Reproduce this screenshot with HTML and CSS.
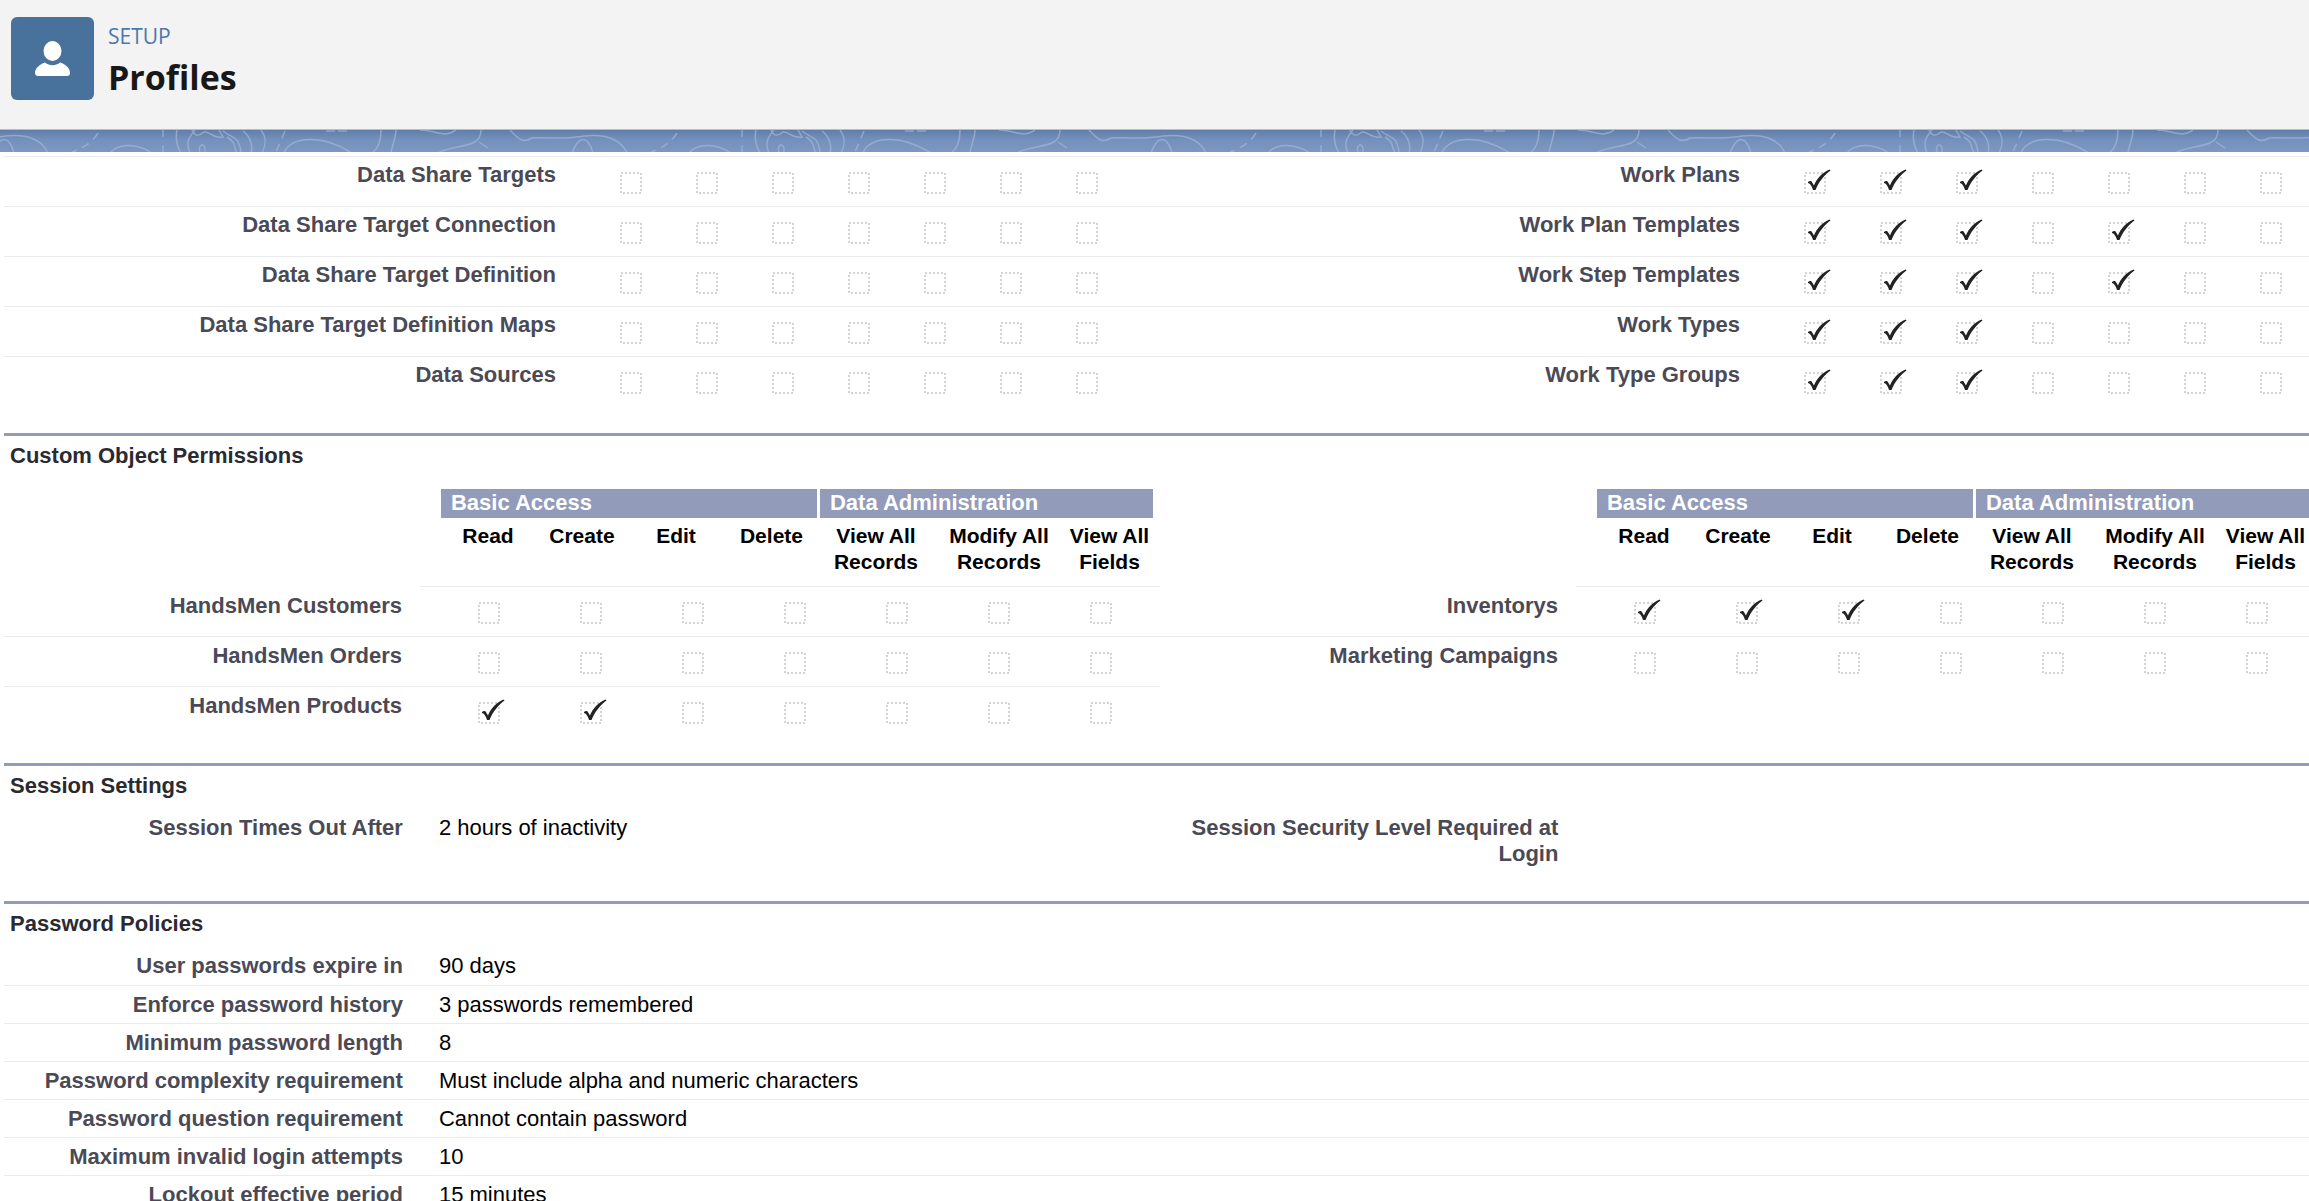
FILE: index.html
```html
<!DOCTYPE html>
<html lang="en">
<head>
<meta charset="utf-8">
<title>Profiles</title>
<link rel="stylesheet" href="styles.css">
</head>
<body>
<header class="page-header">
  <svg class="page-icon" viewBox="0 0 83 83" aria-hidden="true"><ellipse cx="41.500" cy="34" rx="9" ry="10"/><path d="M34 45.500C38.500 49 44.500 49 49 45.500C55 47.500 59 51 59 56Q59 59 56 59H27.500Q24 59 24 56C24 51 28.500 47.500 34 45.500Z"/></svg>
  <div class="page-title">
    <p class="eyebrow">SETUP</p>
    <h1>Profiles</h1>
  </div>
</header>
<svg class="band" aria-hidden="true">
  <defs>
    <linearGradient id="shade" x1="0" y1="0" x2="0" y2="1"><stop offset="0" stop-color="#607ea8"/><stop offset=".45" stop-color="#7491bd"/><stop offset="1" stop-color="#7b97c2"/></linearGradient>
    <pattern id="contours" width="579" height="23" patternUnits="userSpaceOnUse">
      <g fill="none" stroke="#a6b9d8" stroke-opacity=".65" stroke-width="1.500">
        <path d="M-69 0C-59 11-55 13-47 8C-30 7-15 10 5 6C25 4 41 8 48 23M510 0C520 11 524 13 532 8C549 7 564 10 584 6"/>
        <path d="M-7 23C0 5 9 5 14 23M572 23C579 5 588 5 593 23"/>
        <path d="M98 3Q90 16 72 22" stroke-dasharray="8 6"/>
        <path d="M163 0V23" stroke-dasharray="7 8"/>
        <path d="M110 23C118 13 137 13 152 23M177 0C175 10 178 18 181 23M190 23C185 12 190 6 195 0M192 0C195 7 199 6 204 2C209 1 214 9 223 7L219 0M223 1C233 9 239 5 241 23M200 23C198 15 203 12 205 18V23M227 7C237 13 233 17 237 23M243 1C251 7 253 17 251 23M261 0C267 8 266 15 262 23"/>
        <path d="M285 1L276 22" stroke-dasharray="8 6"/>
        <path d="M284 23C291 6 322 4 352 23M381 0C381 10 378 19 372 23M396 0C396 8 392 15 391 23M420 0C436 0 444 9 456 0M438 23C455 13 481 20 481 0M479 12L488 18"/>
        <path d="M326 1H350" stroke-dasharray="9 3"/>
      </g>
    </pattern>
  </defs>
  <rect width="100%" height="100%" fill="url(#shade)"/>
  <rect width="100%" height="100%" fill="url(#contours)"/>
</svg>
<main class="detail">
  <table class="matrix standard">
    <colgroup><col><col class="flag" span="7"><col class="gutter"><col><col class="flag" span="7"></colgroup>
    <tbody>
    <tr><th scope="row">Data Share Targets</th>
      <td><input type="checkbox" disabled aria-label="Read"></td><td><input type="checkbox" disabled aria-label="Create"></td><td><input type="checkbox" disabled aria-label="Edit"></td><td><input type="checkbox" disabled aria-label="Delete"></td><td><input type="checkbox" disabled aria-label="View All Records"></td><td><input type="checkbox" disabled aria-label="Modify All Records"></td><td><input type="checkbox" disabled aria-label="View All Fields"></td><td></td>
      <th scope="row">Work Plans</th>
      <td><input type="checkbox" disabled checked aria-label="Read"></td><td><input type="checkbox" disabled checked aria-label="Create"></td><td><input type="checkbox" disabled checked aria-label="Edit"></td><td><input type="checkbox" disabled aria-label="Delete"></td><td><input type="checkbox" disabled aria-label="View All Records"></td><td><input type="checkbox" disabled aria-label="Modify All Records"></td><td><input type="checkbox" disabled aria-label="View All Fields"></td></tr>
    <tr><th scope="row">Data Share Target Connection</th>
      <td><input type="checkbox" disabled aria-label="Read"></td><td><input type="checkbox" disabled aria-label="Create"></td><td><input type="checkbox" disabled aria-label="Edit"></td><td><input type="checkbox" disabled aria-label="Delete"></td><td><input type="checkbox" disabled aria-label="View All Records"></td><td><input type="checkbox" disabled aria-label="Modify All Records"></td><td><input type="checkbox" disabled aria-label="View All Fields"></td><td></td>
      <th scope="row">Work Plan Templates</th>
      <td><input type="checkbox" disabled checked aria-label="Read"></td><td><input type="checkbox" disabled checked aria-label="Create"></td><td><input type="checkbox" disabled checked aria-label="Edit"></td><td><input type="checkbox" disabled aria-label="Delete"></td><td><input type="checkbox" disabled checked aria-label="View All Records"></td><td><input type="checkbox" disabled aria-label="Modify All Records"></td><td><input type="checkbox" disabled aria-label="View All Fields"></td></tr>
    <tr><th scope="row">Data Share Target Definition</th>
      <td><input type="checkbox" disabled aria-label="Read"></td><td><input type="checkbox" disabled aria-label="Create"></td><td><input type="checkbox" disabled aria-label="Edit"></td><td><input type="checkbox" disabled aria-label="Delete"></td><td><input type="checkbox" disabled aria-label="View All Records"></td><td><input type="checkbox" disabled aria-label="Modify All Records"></td><td><input type="checkbox" disabled aria-label="View All Fields"></td><td></td>
      <th scope="row">Work Step Templates</th>
      <td><input type="checkbox" disabled checked aria-label="Read"></td><td><input type="checkbox" disabled checked aria-label="Create"></td><td><input type="checkbox" disabled checked aria-label="Edit"></td><td><input type="checkbox" disabled aria-label="Delete"></td><td><input type="checkbox" disabled checked aria-label="View All Records"></td><td><input type="checkbox" disabled aria-label="Modify All Records"></td><td><input type="checkbox" disabled aria-label="View All Fields"></td></tr>
    <tr><th scope="row">Data Share Target Definition Maps</th>
      <td><input type="checkbox" disabled aria-label="Read"></td><td><input type="checkbox" disabled aria-label="Create"></td><td><input type="checkbox" disabled aria-label="Edit"></td><td><input type="checkbox" disabled aria-label="Delete"></td><td><input type="checkbox" disabled aria-label="View All Records"></td><td><input type="checkbox" disabled aria-label="Modify All Records"></td><td><input type="checkbox" disabled aria-label="View All Fields"></td><td></td>
      <th scope="row">Work Types</th>
      <td><input type="checkbox" disabled checked aria-label="Read"></td><td><input type="checkbox" disabled checked aria-label="Create"></td><td><input type="checkbox" disabled checked aria-label="Edit"></td><td><input type="checkbox" disabled aria-label="Delete"></td><td><input type="checkbox" disabled aria-label="View All Records"></td><td><input type="checkbox" disabled aria-label="Modify All Records"></td><td><input type="checkbox" disabled aria-label="View All Fields"></td></tr>
    <tr><th scope="row">Data Sources</th>
      <td><input type="checkbox" disabled aria-label="Read"></td><td><input type="checkbox" disabled aria-label="Create"></td><td><input type="checkbox" disabled aria-label="Edit"></td><td><input type="checkbox" disabled aria-label="Delete"></td><td><input type="checkbox" disabled aria-label="View All Records"></td><td><input type="checkbox" disabled aria-label="Modify All Records"></td><td><input type="checkbox" disabled aria-label="View All Fields"></td><td></td>
      <th scope="row">Work Type Groups</th>
      <td><input type="checkbox" disabled checked aria-label="Read"></td><td><input type="checkbox" disabled checked aria-label="Create"></td><td><input type="checkbox" disabled checked aria-label="Edit"></td><td><input type="checkbox" disabled aria-label="Delete"></td><td><input type="checkbox" disabled aria-label="View All Records"></td><td><input type="checkbox" disabled aria-label="Modify All Records"></td><td><input type="checkbox" disabled aria-label="View All Fields"></td></tr>
    </tbody>
  </table>

  <section class="block">
    <h2>Custom Object Permissions</h2>
    <table class="matrix custom">
      <colgroup><col><col class="lead"><col class="flag" span="7"><col class="gutter"><col><col class="lead"><col class="flag" span="7"></colgroup>
      <thead>
      <tr><td></td><td class="lined"></td>
        <td class="lined" colspan="7"><div class="heads"><span class="group basic">Basic Access</span><span class="group admin">Data Administration</span><span>Read</span><span>Create</span><span>Edit</span><span>Delete</span><span>View All<br>Records</span><span>Modify All<br>Records</span><span>View All<br>Fields</span></div></td>
        <td class="lined"></td><td></td><td class="lined"></td>
        <td class="lined" colspan="7"><div class="heads"><span class="group basic">Basic Access</span><span class="group admin">Data Administration</span><span>Read</span><span>Create</span><span>Edit</span><span>Delete</span><span>View All<br>Records</span><span>Modify All<br>Records</span><span>View All<br>Fields</span></div></td></tr>
      </thead>
      <tbody>
      <tr><th scope="row">HandsMen Customers</th><td></td>
        <td><input type="checkbox" disabled aria-label="Read"></td><td><input type="checkbox" disabled aria-label="Create"></td><td><input type="checkbox" disabled aria-label="Edit"></td><td><input type="checkbox" disabled aria-label="Delete"></td><td><input type="checkbox" disabled aria-label="View All Records"></td><td><input type="checkbox" disabled aria-label="Modify All Records"></td><td><input type="checkbox" disabled aria-label="View All Fields"></td><td></td>
        <th scope="row">Inventorys</th><td></td>
        <td><input type="checkbox" disabled checked aria-label="Read"></td><td><input type="checkbox" disabled checked aria-label="Create"></td><td><input type="checkbox" disabled checked aria-label="Edit"></td><td><input type="checkbox" disabled aria-label="Delete"></td><td><input type="checkbox" disabled aria-label="View All Records"></td><td><input type="checkbox" disabled aria-label="Modify All Records"></td><td><input type="checkbox" disabled aria-label="View All Fields"></td></tr>
      <tr><th scope="row">HandsMen Orders</th><td></td>
        <td><input type="checkbox" disabled aria-label="Read"></td><td><input type="checkbox" disabled aria-label="Create"></td><td><input type="checkbox" disabled aria-label="Edit"></td><td><input type="checkbox" disabled aria-label="Delete"></td><td><input type="checkbox" disabled aria-label="View All Records"></td><td><input type="checkbox" disabled aria-label="Modify All Records"></td><td><input type="checkbox" disabled aria-label="View All Fields"></td><td></td>
        <th scope="row" class="last">Marketing Campaigns</th><td class="last"></td>
        <td class="last"><input type="checkbox" disabled aria-label="Read"></td><td class="last"><input type="checkbox" disabled aria-label="Create"></td><td class="last"><input type="checkbox" disabled aria-label="Edit"></td><td class="last"><input type="checkbox" disabled aria-label="Delete"></td><td class="last"><input type="checkbox" disabled aria-label="View All Records"></td><td class="last"><input type="checkbox" disabled aria-label="Modify All Records"></td><td class="last"><input type="checkbox" disabled aria-label="View All Fields"></td></tr>
      <tr><th scope="row">HandsMen Products</th><td></td>
        <td><input type="checkbox" disabled checked aria-label="Read"></td><td><input type="checkbox" disabled checked aria-label="Create"></td><td><input type="checkbox" disabled aria-label="Edit"></td><td><input type="checkbox" disabled aria-label="Delete"></td><td><input type="checkbox" disabled aria-label="View All Records"></td><td><input type="checkbox" disabled aria-label="Modify All Records"></td><td><input type="checkbox" disabled aria-label="View All Fields"></td><td></td>
        <td colspan="9"></td></tr>
      </tbody>
    </table>
  </section>

  <section class="block">
    <h2>Session Settings</h2>
    <table class="fields">
      <tbody>
      <tr><th scope="row">Session Times Out After</th><td>2 hours of inactivity</td><th scope="row">Session Security Level Required at Login</th><td></td></tr>
      </tbody>
    </table>
  </section>

  <section class="block">
    <h2>Password Policies</h2>
    <table class="fields">
      <tbody>
      <tr><th scope="row">User passwords expire in</th><td colspan="3">90 days</td></tr>
      <tr><th scope="row">Enforce password history</th><td colspan="3">3 passwords remembered</td></tr>
      <tr><th scope="row">Minimum password length</th><td colspan="3">8</td></tr>
      <tr><th scope="row">Password complexity requirement</th><td colspan="3">Must include alpha and numeric characters</td></tr>
      <tr><th scope="row">Password question requirement</th><td colspan="3">Cannot contain password</td></tr>
      <tr><th scope="row">Maximum invalid login attempts</th><td colspan="3">10</td></tr>
      <tr><th scope="row">Lockout effective period</th><td colspan="3">15 minutes</td></tr>
      </tbody>
    </table>
  </section>
</main>
</body>
</html>
```
FILE: styles.css
```css
* { box-sizing: border-box; }

body {
  margin: 0;
  height: 100vh;
  display: flex;
  flex-direction: column;
  overflow: hidden;
  background: #fff;
  color: #000;
  font: 22px/26px "Liberation Sans", Arial, sans-serif;
}

h1, h2, p { margin: 0; }

.page-header {
  flex: none;
  display: flex;
  gap: 14px;
  height: 130px;
  padding: 17px 11px;
  background: #f3f3f3;
  border-bottom: 1px solid #b9bcc1;
}

.page-icon {
  width: 83px;
  height: 83px;
  border-radius: 6px;
  background: #48729b;
  fill: #fff;
}

.page-title { font-family: "Open Sans", "Noto Sans", sans-serif; }

.eyebrow {
  font-size: 21px;
  line-height: 38px;
  color: #4c78ac;
}

h1 {
  font-size: 34px;
  line-height: 44px;
  font-weight: 700;
  color: #181818;
}

.band {
  flex: none;
  display: block;
  width: 100%;
  height: 22px;
}

.detail {
  flex: 1;
  min-height: 0;
  overflow: hidden;
  padding: 4px 0 0 4px;
}

table {
  width: 100%;
  table-layout: fixed;
  border-collapse: collapse;
}

th, td {
  padding: 0;
  vertical-align: top;
  font-weight: 400;
}

/* Permission grids */
.matrix tbody tr { height: 50px; }
.matrix tbody th,
.matrix tbody td { border-bottom: 1px solid #ebebeb; }
.matrix tbody tr:last-child > *,
.matrix tbody .last { border-bottom-color: transparent; }
.matrix tbody td { text-align: center; }

.matrix th,
.fields th {
  font-weight: 700;
  text-align: right;
  color: #4a4a56;
}

.standard { border-top: 1px solid #ebebeb; }
.standard .flag { width: 76px; }
.standard .gutter { width: 63px; }
.standard th { padding: 5px 37px 0 0; }

.custom .lead { width: 19px; }
.custom .flag { width: 102px; }
.custom .gutter { width: 7px; }
.custom th { padding: 6px 18px 0 0; }
.custom .lined { border-bottom: 1px solid #ebebeb; }

input[type="checkbox"] {
  appearance: none;
  display: block;
  width: 33px;
  height: 33px;
  margin: 10px auto 0;
  background: url("data:image/svg+xml,%3Csvg xmlns='http://www.w3.org/2000/svg' width='33' height='33'%3E%3Crect x='6' y='6' width='20' height='20' fill='none' stroke='%23c6c6c6' stroke-width='1.500' stroke-dasharray='2 2'/%3E%3C/svg%3E") no-repeat;
}

input[type="checkbox"]:checked {
  background-image: url("data:image/svg+xml,%3Csvg xmlns='http://www.w3.org/2000/svg' width='33' height='33'%3E%3Crect x='6' y='6' width='20' height='20' fill='none' stroke='%23c6c6c6' stroke-width='1.500' stroke-dasharray='2 2'/%3E%3Cpath fill='%23222222' d='M9 15C10.500 13.500 12.500 13.500 13.200 15.500L15 18.500C17.500 12 23.500 5 30.500 2.500L31.500 3.500C25.500 7.500 19.500 15.500 16.500 23H14C13 19.500 11.500 16.500 9 16Z'/%3E%3C/svg%3E");
}

/* Two-level column heads */
.heads {
  display: grid;
  grid-template-columns: 94px 94px 94px 97px 112px 134px 1fr;
  height: 97px;
  margin-left: 2px;
  align-content: start;
  font-size: 21px;
  font-weight: 700;
  text-align: center;
}
.heads span { padding-top: 5px; }
.heads .group {
  height: 29px;
  padding: 1px 0 0 10px;
  font-size: 22px;
  text-align: left;
  background: #939bbb;
  color: #fff;
}
.heads .basic { grid-column: span 4; margin-right: 3px; }
.heads .admin { grid-column: span 3; }

/* Titled sections */
.block {
  margin-top: 26px;
  border-top: 3px solid #939bbb;
}
h2 {
  padding: 7px 0 0 6px;
  font-size: 22px;
  line-height: 26px;
  font-weight: 700;
  color: #2a2a30;
}
.custom { margin-top: 20px; }

.fields { margin-top: 10px; }
.fields tr { height: 38px; }
.fields tr:not(:last-child) > * { border-bottom: 1px solid #ebebeb; }
.fields th,
.fields td { padding-top: 6px; }
.fields th { width: 18%; padding-right: 16px; }
.fields td + th { padding-right: 13px; padding-bottom: 8px; }
.fields td { padding-left: 20px; }
```
